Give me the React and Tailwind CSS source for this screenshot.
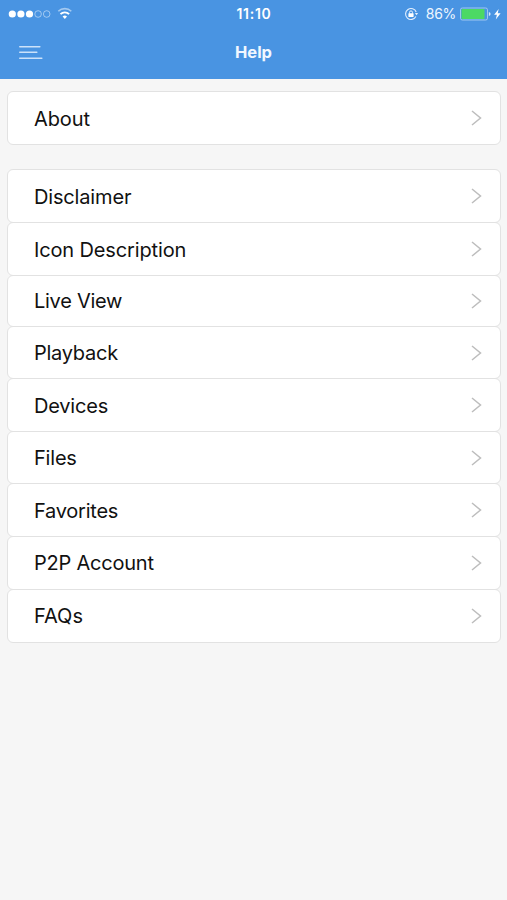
const topics = [
  { label: 'Disclaimer', size: 'h-[54px]', text: 'pt-[2px] tracking-[-0.16px]' },
  { label: 'Icon Description', size: 'h-[54px]', text: 'pt-[2px] tracking-[-0.14px]' },
  { label: 'Live View', size: 'h-[52px]', text: 'tracking-[-0.28px]' },
  { label: 'Playback', size: 'h-[53px]', text: 'tracking-[-0.26px]' },
  { label: 'Devices', size: 'h-[54px]', text: 'pt-[2px] tracking-[-0.2px]' },
  { label: 'Files', size: 'h-[53px]', text: 'tracking-[-0.2px]' },
  { label: 'Favorites', size: 'h-[54px]', text: 'pt-[2px] tracking-[-0.25px]' },
  { label: 'P2P Account', size: 'h-[54px]', text: 'tracking-[-0.22px]' },
  { label: 'FAQs', size: 'h-[54px]', text: 'tracking-[0px]' },
];

function Row({ label, size, text }) {
  return (
    <button className={`-mb-px flex w-full items-center justify-between rounded-[6px] border border-[#e2e2e2] bg-white pr-[18px] pl-[26px] text-left ${size}`}>
      <span className={`text-[20px] leading-6 text-[#111] ${text}`}>{label}</span>
      <svg className="h-4 w-3" viewBox="0 0 12 16" fill="none" stroke="#bdbdbd" strokeWidth="1.5">
        <path d="M2 1l8.5 7L2 15" />
      </svg>
    </button>
  );
}

function StatusBar() {
  return (
    <div className="grid h-[27px] grid-cols-3 items-center pr-[5px] pl-2">
      <svg className="h-[14px] w-[66px]" viewBox="0 0 66 14" fill="none">
        <g fill="#fff">
          <circle cx="4.3" cy="7" r="3.6" />
          <circle cx="12.9" cy="7" r="3.6" />
          <circle cx="21.5" cy="7" r="3.6" />
        </g>
        <g stroke="#fff" strokeOpacity=".6" strokeWidth=".8">
          <circle cx="30.1" cy="7" r="3.3" />
          <circle cx="38.7" cy="7" r="3.3" />
        </g>
        <path d="M50.3 4.3a9.2 9.2 0 0 1 13 0" stroke="#fff" strokeOpacity=".5" strokeWidth="1.6" />
        <path d="M52.5 7.1a6.1 6.1 0 0 1 8.6 0" stroke="#fff" strokeWidth="1.9" />
        <path d="M54.6 9.6a3.1 3.1 0 0 1 4.4 0l-2.2 2.5z" fill="#fff" />
      </svg>
      <span className="pr-[2px] text-center text-[14px] leading-[18px] font-semibold tracking-[0.7px] text-white">11:10</span>
      <div className="flex items-center justify-end">
        <svg className="mr-[7px] h-[14px] w-[15px]" viewBox="0 0 15 14" fill="none" stroke="#e4f0ff">
          <path d="M11.9 9.6A5.5 5.5 0 1 1 12.2 5" strokeWidth="1.1" />
          <path d="M10.9 6h3.2l-1.6 2.3z" fill="#e4f0ff" stroke="none" />
          <path d="M5.5 6.6V5.4a1.5 1.5 0 0 1 3 0v1.2" strokeWidth="1" />
          <rect x="4.4" y="6.3" width="5.2" height="3.6" rx=".4" fill="#fff" stroke="none" />
        </svg>
        <span className="mr-1 text-[14px] leading-[18px] tracking-[-0.3px] text-[#eef6ff]">86%</span>
        <svg className="h-[14px] w-[42px]" viewBox="0 0 42 14" fill="none">
          <rect x=".5" y="1" width="27" height="12" rx="1.8" stroke="#a9cdf3" strokeWidth=".9" />
          <rect x="1.5" y="2" width="23" height="10" rx=".8" fill="#4cd964" />
          <path d="M28.9 5.1q1.7.3 1.7 1.9t-1.7 1.9z" fill="#d6e9ff" />
          <path d="M38.7 1.9L34.1 7.8h2.8l-1.1 4.6 4.8-6.1h-2.9z" fill="#fff" />
        </svg>
      </div>
    </div>
  );
}

export default function App() {
  return (
    <div className="min-h-[900px] w-full bg-[#f6f6f6] font-['Inter','Liberation_Sans',sans-serif]">
      <header className="h-[79px] bg-[#4994e2]">
        <StatusBar />
        <div className="grid h-[52px] grid-cols-3 items-center px-[18px]">
          <svg className="h-4 w-[26px]" viewBox="0 0 26 16" fill="none" stroke="#cce2fa" strokeWidth="1.6" strokeLinecap="round">
            <path d="M1.8 1.7h20M1.8 7.2h17M1.8 13.2h22" />
          </svg>
          <h1 className="pb-[2px] text-center text-[16.5px] leading-5 font-bold text-[#f1f7ff]">Help</h1>
        </div>
      </header>
      <main className="flex flex-col gap-[25px] pt-3 pr-[6px] pl-[7px]">
        <section>
          <Row label="About" size="h-[54px]" text="pt-[2px] tracking-[-0.1px]" />
        </section>
        <section>
          {topics.map((topic) => (
            <Row key={topic.label} {...topic} />
          ))}
        </section>
      </main>
    </div>
  );
}
